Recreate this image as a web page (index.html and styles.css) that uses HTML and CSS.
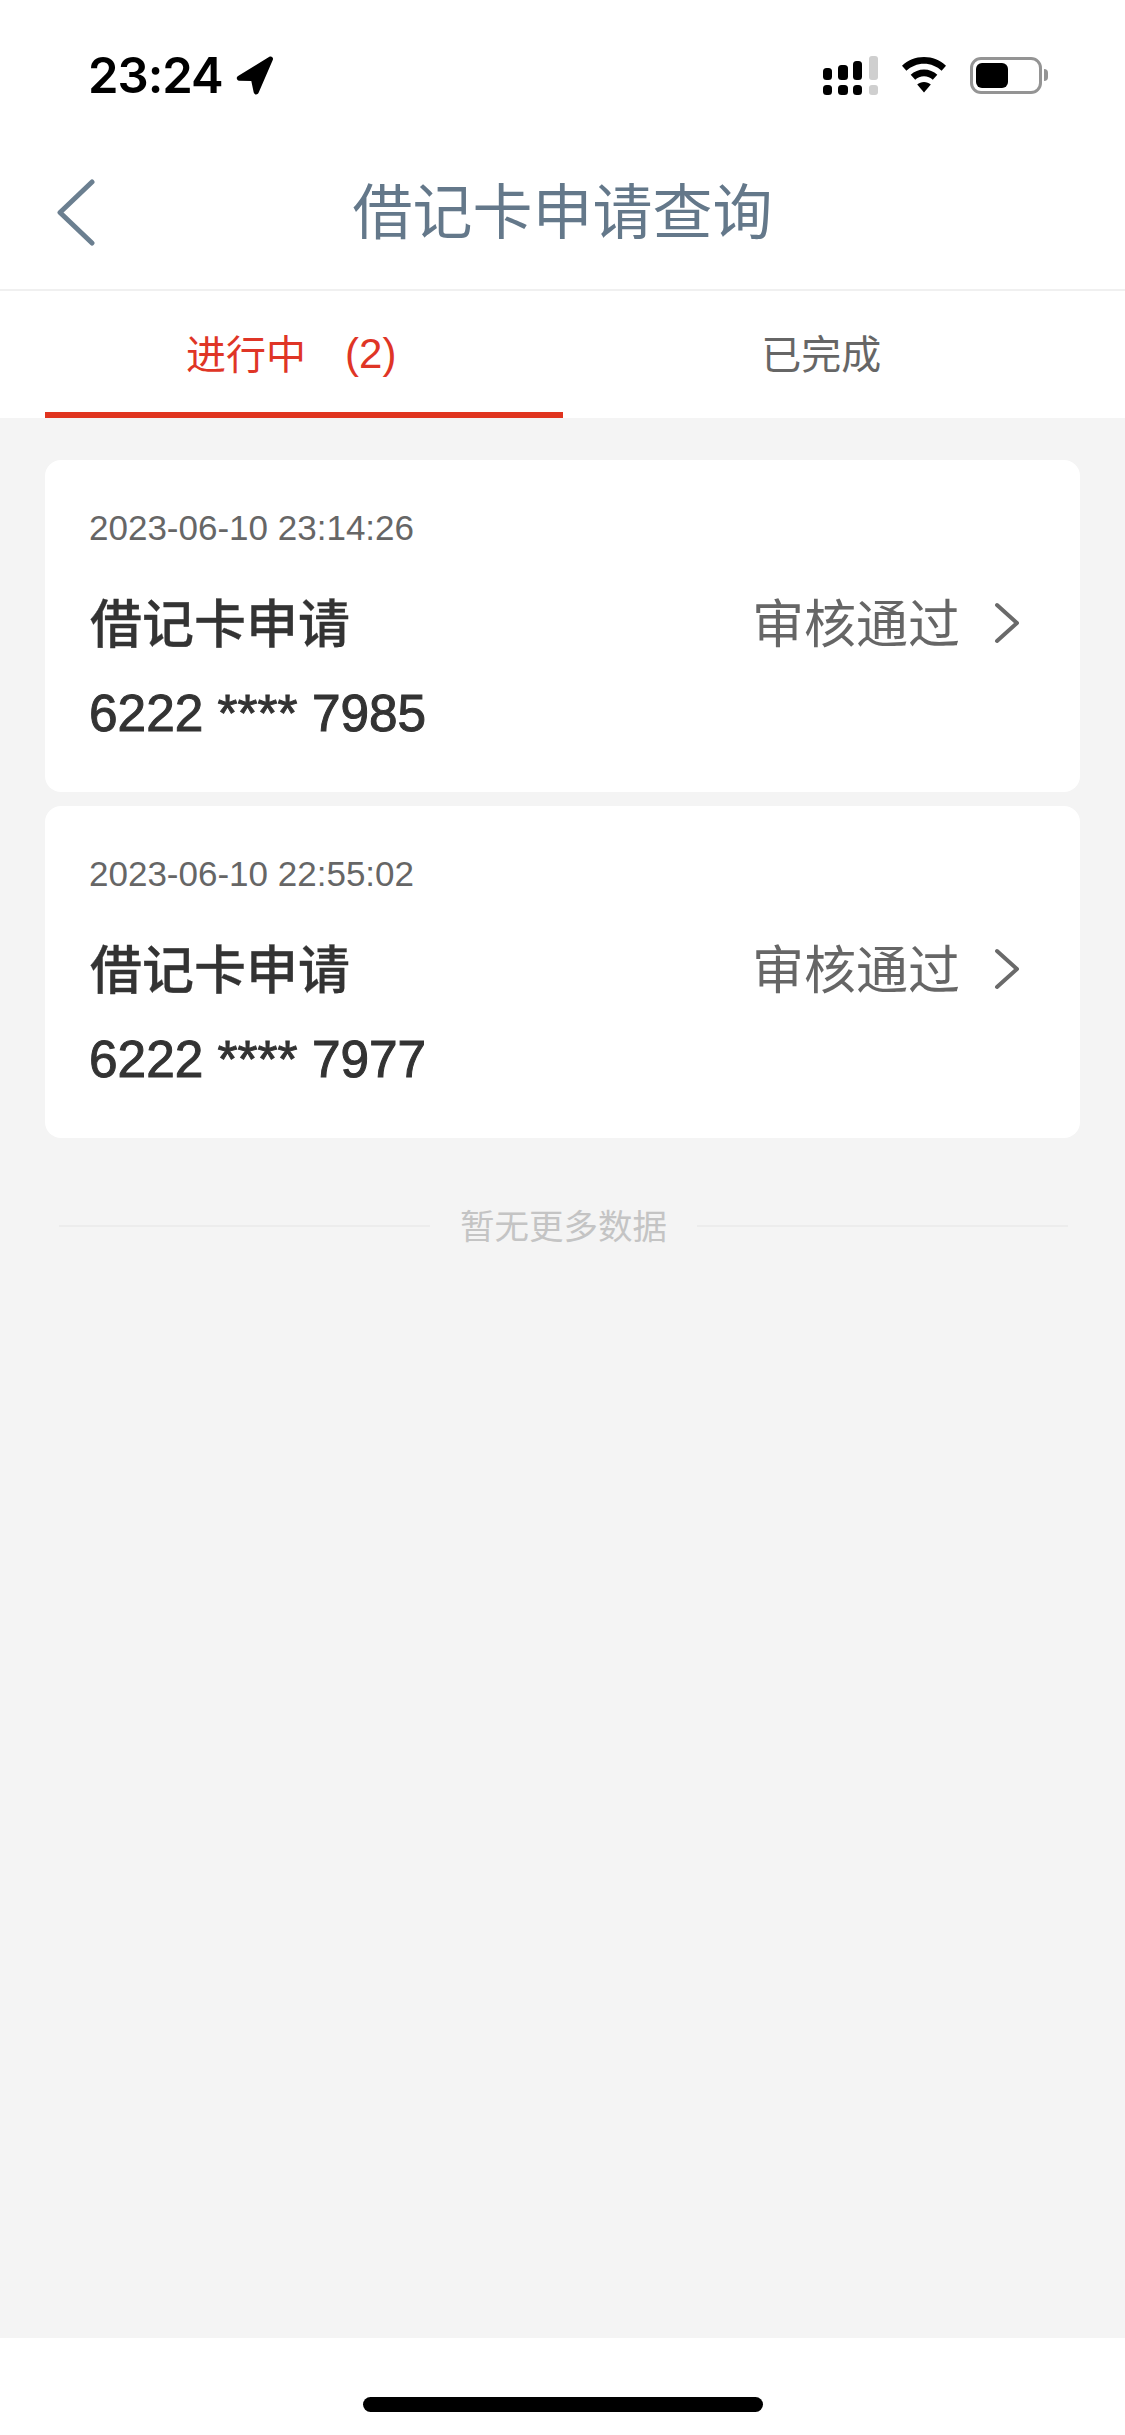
FILE: index.html
```html
<!DOCTYPE html>
<html lang="zh-CN">
  <head>
    <meta charset="utf-8">
    <title>借记卡申请查询</title>
    <link rel="stylesheet" href="styles.css">
  </head>
  <body>
    <div class="page">
      <!-- iOS status bar -->
      <div class="status-bar">
        <div class="status-left">
          <span class="time">23:24</span>
          <svg class="location" viewBox="0 0 36 38" width="38" height="39">
            <path d="M1.500 19.500 32 .8c2-1.200 4.200.7 3.400 2.800L21.500 35.800c-1 2.400-4.300 2.100-4.800-.4l-2.300-11-11.800-.4c-2.700-.1-3.100-3.300-1.100-4.500z" fill="#000"/>
          </svg>
        </div>
        <div class="status-right">
          <svg class="signal" viewBox="0 0 55 39" width="55" height="39">
            <rect x="0" y="12" width="9" height="12" rx="3.500" fill="#000"/>
            <rect x="0" y="29" width="9" height="10" rx="3.500" fill="#000"/>
            <rect x="15" y="9" width="10" height="15" rx="3.500" fill="#000"/>
            <rect x="15" y="29" width="10" height="10" rx="3.500" fill="#000"/>
            <rect x="30" y="5" width="9" height="19" rx="3.500" fill="#000"/>
            <rect x="30" y="29" width="9" height="10" rx="3.500" fill="#000"/>
            <rect x="46" y="0" width="9" height="24" rx="3" fill="#cfcfcf"/>
            <rect x="46" y="29" width="9" height="10" rx="3" fill="#cfcfcf"/>
          </svg>
          <svg class="wifi" viewBox="0 0 46 36" width="48" height="36">
            <path d="M23 0C14.500 0 6.800 3.300 1 8.700l4.400 5C10 9.400 16.200 6.700 23 6.700s13 2.700 17.600 7l4.400-5C39.200 3.300 31.500 0 23 0z" fill="#000"/>
            <path d="M23 12.500c-5.100 0-9.800 2-13.300 5.200l4.500 5c2.300-2.100 5.400-3.400 8.800-3.400s6.500 1.300 8.800 3.400l4.500-5C32.800 14.500 28.100 12.500 23 12.500z" fill="#000"/>
            <path d="M23 25c-2.600 0-5 1-6.800 2.600L23 35.500l6.800-7.900C28 26 25.600 25 23 25z" fill="#000"/>
          </svg>
          <div class="battery">
            <div class="battery-body"><div class="battery-level"></div></div>
            <div class="battery-nub"></div>
          </div>
        </div>
      </div>

      <header class="nav-bar">
        <svg class="back" viewBox="0 0 40 70" width="40" height="70">
          <path d="M37 4 5 34.500 37 65" fill="none" stroke="#6b7f90" stroke-width="5" stroke-linecap="round" stroke-linejoin="round"/>
        </svg>
        <h1 class="nav-title">借记卡申请查询</h1>
      </header>

      <nav class="tabs">
        <div class="tab tab-active">进行中<span class="tab-count">(2)</span></div>
        <div class="tab">已完成</div>
      </nav>

      <main class="content">
        <div class="card">
          <div class="card-date">2023-06-10 23:14:26</div>
          <div class="card-row">
            <span class="card-title">借记卡申请</span>
            <span class="card-status">审核通过
              <svg class="chevron" viewBox="0 0 26 42" width="26" height="42">
                <path d="M3 3 23 21 3 39" fill="none" stroke="#6a6a6a" stroke-width="4" stroke-linecap="round" stroke-linejoin="round"/>
              </svg>
            </span>
          </div>
          <div class="card-number">6222 **** 7985</div>
        </div>

        <div class="card">
          <div class="card-date">2023-06-10 22:55:02</div>
          <div class="card-row">
            <span class="card-title">借记卡申请</span>
            <span class="card-status">审核通过
              <svg class="chevron" viewBox="0 0 26 42" width="26" height="42">
                <path d="M3 3 23 21 3 39" fill="none" stroke="#6a6a6a" stroke-width="4" stroke-linecap="round" stroke-linejoin="round"/>
              </svg>
            </span>
          </div>
          <div class="card-number">6222 **** 7977</div>
        </div>

        <div class="no-more">
          <span class="no-more-line"></span>
          <span class="no-more-text">暂无更多数据</span>
          <span class="no-more-line"></span>
        </div>
      </main>

      <footer class="home-area">
        <div class="home-bar"></div>
      </footer>
    </div>
  </body>
</html>
```

FILE: styles.css
```css
html, body {
  margin: 0;
  padding: 0;
}
body {
  background-color: #ffffff;
  font-family: "Liberation Sans", "Noto Sans CJK SC", sans-serif;
}
.page {
  display: flex;
  flex-direction: column;
  width: 1125px;
  height: 2435px;
  overflow: hidden;
}

/* status bar */
.status-bar {
  display: flex;
  justify-content: space-between;
  align-items: center;
  height: 150px;
  padding: 0 77px 0 88px;
  box-sizing: border-box;
}
.status-left {
  display: flex;
  align-items: center;
  gap: 13px;
}
.time {
  font-family: Inter, sans-serif;
  font-size: 49px;
  font-weight: 600;
  line-height: 50px;
  color: #000000;
  letter-spacing: -1px;
  padding-top: 2px;
}
.status-right {
  display: flex;
  align-items: center;
  gap: 22px;
}
.battery {
  display: flex;
  align-items: center;
  gap: 2px;
}
.battery-body {
  width: 72px;
  height: 37px;
  border: 3px solid #949494;
  border-radius: 11px;
  box-sizing: border-box;
  padding: 3px;
}
.battery-level {
  width: 32px;
  height: 100%;
  background-color: #000000;
  border-radius: 6px;
}
.battery-nub {
  width: 4px;
  height: 12px;
  background-color: #949494;
  border-radius: 0 4px 4px 0;
}

/* title bar */
.nav-bar {
  display: grid;
  grid-template-columns: 1fr auto 1fr;
  align-items: center;
  height: 115px;
  padding-bottom: 24px;
  border-bottom: 2px solid #f0f0f0;
}
.back {
  align-self: start;
  margin: 28px 0 0 55px;
}
.nav-title {
  margin: 0;
  font-family: "Noto Sans CJK SC", sans-serif;
  font-size: 60px;
  font-weight: 400;
  color: #64788a;
  line-height: 90px;
}

/* tabs */
.tabs {
  display: flex;
  height: 127px;
  padding: 0 45px;
}
.tab {
  flex: 1;
  display: flex;
  align-items: center;
  justify-content: center;
  font-size: 40px;
  font-family: "Noto Sans CJK SC", sans-serif;
  color: #666666;
  box-sizing: border-box;
  padding-bottom: 6px;
}
.tab-active {
  color: #df3526;
  border-bottom: 6px solid #e0341f;
  padding-bottom: 0;
}
.tab-count {
  font-family: "Liberation Sans", sans-serif;
  font-size: 42px;
  margin-left: 39px;
  margin-right: 25px;
  padding-top: 5px;
}

/* list */
.content {
  flex: 1;
  background-color: #f4f4f4;
  padding: 42px 45px 0;
  display: flex;
  flex-direction: column;
  gap: 14px;
}
.card {
  background-color: #ffffff;
  border-radius: 16px;
  height: 332px;
  padding: 48px 60px 0 44px;
  box-sizing: border-box;
}
.card-date {
  font-size: 35px;
  line-height: 40px;
  color: #666666;
}
.card-row {
  display: flex;
  justify-content: space-between;
  align-items: center;
  margin-top: 40px;
  height: 64px;
}
.card-title {
  font-family: "Noto Sans CJK SC", sans-serif;
  font-size: 52px;
  font-weight: 500;
  color: #333333;
  margin-left: 1px;
  -webkit-text-stroke: 0.3px #333333;
}
.card-status {
  display: flex;
  align-items: center;
  gap: 34px;
  font-family: "Noto Sans CJK SC", sans-serif;
  font-size: 52px;
  color: #666666;
}
.chevron {
  margin-top: 5px;
}
.card-number {
  margin-top: 29px;
  font-size: 51.4px;
  line-height: 64px;
  color: #333333;
  -webkit-text-stroke: 1px #333333;
}

.no-more {
  display: flex;
  align-items: center;
  gap: 30px;
  margin-top: 49px;
  padding: 0 12px 0 14px;
  height: 50px;
}
.no-more-line {
  flex: 1;
  height: 2px;
  background-color: #ececec;
}
.no-more-text {
  font-family: "Noto Sans CJK SC", sans-serif;
  font-size: 34.5px;
  color: #c4c4c4;
  margin-bottom: 4px;
}

/* home indicator */
.home-area {
  display: flex;
  justify-content: center;
  height: 97px;
  padding-top: 59px;
  box-sizing: border-box;
  background-color: #ffffff;
}
.home-bar {
  width: 400px;
  height: 15px;
  border-radius: 8px;
  background-color: #000000;
}
```
